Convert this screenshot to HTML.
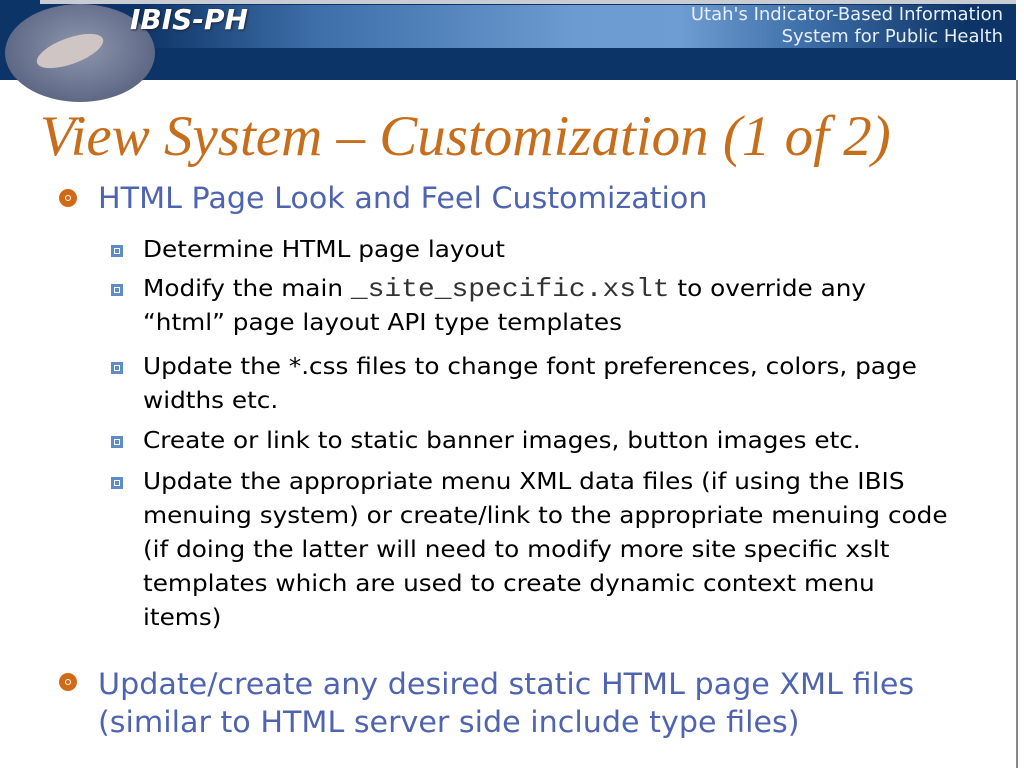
<!DOCTYPE html>
<html><head><style>
body{margin:0;width:1024px;height:768px;background:#fff;position:relative;overflow:hidden;font-family:"DejaVu Sans","Liberation Sans",sans-serif}
.hdr{position:absolute;left:0;top:0;width:1016px;height:80px;background:#0d3466}
.top{position:absolute;left:40px;top:0;width:976px;height:4px;background:#c9cdd3}
.grad{position:absolute;left:140px;top:5px;width:870px;height:43px;background:linear-gradient(90deg,#0d3466 0%,#3d6ea8 20%,#6b9bd0 50%,#6d9dd2 62%,#3a6aa4 78%,#0d3466 95%)}
.bird{position:absolute;left:5px;top:4px;width:150px;height:98px;border-radius:50%;background:radial-gradient(ellipse at 50% 45%,#8f97ad,#5f6986 70%,#4d5672)}
.birdb{position:absolute;left:35px;top:38px;width:70px;height:26px;border-radius:50%;background:#cfc5c4;transform:rotate(-20deg)}
.ibis{position:absolute;left:130px;top:3px;color:#fff;font-style:italic;font-weight:bold;font-size:28px;text-shadow:1px 1px 2px #223}
.ut{position:absolute;right:21px;top:4px;text-align:right;color:#e8eef6;font-size:18px;line-height:22px}
.rb{position:absolute;left:1016px;top:80px;width:2px;height:688px;background:#888}
h1{position:absolute;left:40px;top:104px;margin:0;font-family:"Liberation Serif",serif;font-style:italic;font-weight:normal;color:#c76e1c;font-size:57px}
.b1{position:absolute;left:98px;color:#4f64b0;font-size:29px;line-height:38px;font-family:"DejaVu Sans",sans-serif;transform-origin:0 0;transform:scaleX(1.04);white-space:nowrap}
.d1{position:absolute;left:59px;width:18px;height:18px;border-radius:50%;background:#d06a16}
.d1:before{content:"";position:absolute;left:6px;top:6px;width:4px;height:4px;border:1px solid #fff;border-radius:50%}
.b2{position:absolute;left:143px;font-size:23px;line-height:34px;color:#000;font-family:"DejaVu Sans",sans-serif;transform-origin:0 0;transform:scaleX(1.075);white-space:nowrap}
.d2{position:absolute;left:111px;width:12px;height:12px;background:#5d8cc7}
.d2:before{content:"";position:absolute;left:3px;top:3px;width:4px;height:4px;border:1px solid #fff}
code{font-family:"Liberation Mono",monospace;font-size:26px;color:#333}
</style></head><body>
<div class="hdr"></div><div class="top"></div><div class="grad"></div>
<div class="bird"></div><div class="birdb"></div>
<div class="ibis">IBIS-PH</div>
<div class="ut">Utah's Indicator-Based Information<br>System for Public Health</div>
<div class="rb"></div>
<h1>View System – Customization (1 of 2)</h1>
<div class="d1" style="top:189px"></div>
<div class="b1" style="top:179px">HTML Page Look and Feel Customization</div>
<div class="d2" style="top:245px"></div>
<div class="b2" style="top:233px">Determine HTML page layout</div>
<div class="d2" style="top:284px"></div>
<div class="b2" style="top:272px">Modify the main <code>_site_specific.xslt</code> to override any<br>“html” page layout API type templates</div>
<div class="d2" style="top:362px"></div>
<div class="b2" style="top:350px">Update the *.css files to change font preferences, colors, page<br>widths etc.</div>
<div class="d2" style="top:436px"></div>
<div class="b2" style="top:424px">Create or link to static banner images, button images etc.</div>
<div class="d2" style="top:477px"></div>
<div class="b2" style="top:465px">Update the appropriate menu XML data files (if using the IBIS<br>menuing system) or create/link to the appropriate menuing code<br>(if doing the latter will need to modify more site specific xslt<br>templates which are used to create dynamic context menu<br>items)</div>
<div class="d1" style="top:673px"></div>
<div class="b1" style="top:665px">Update/create any desired static HTML page XML files<br>(similar to HTML server side include type files)</div>
</body></html>
